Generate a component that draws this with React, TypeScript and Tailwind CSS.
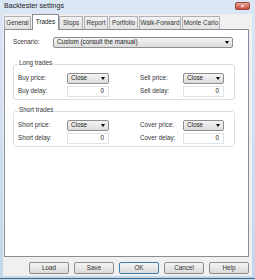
import React from 'react';

const tabs = [
  { name: 'General', w: 'w-[27px]' },
  { name: 'Trades', w: 'w-[27px]', active: true },
  { name: 'Stops', w: 'w-[24px]' },
  { name: 'Report', w: 'w-[24px]' },
  { name: 'Portfolio', w: 'w-[29px]' },
  { name: 'Walk-Forward', w: 'w-[42px]' },
  { name: 'Monte Carlo', w: 'w-[38px]' },
];

const Arrow = () => (
  <span className="w-0 h-0 border-l-[2.5px] border-r-[2.5px] border-t-[3px] border-l-transparent border-r-transparent border-t-black" />
);

const Select = ({ value, w }: { value: string; w: string }) => (
  <div className={`${w} h-[11px] flex items-center justify-between pl-[3px] pr-[3px] rounded-[2px] border border-[#8e8e8e] bg-gradient-to-b from-[#f4f4f4] to-[#dcdcdc] text-[#222]`}>
    <span className="leading-none">{value}</span>
    <Arrow />
  </div>
);

const NumInput = ({ w }: { w: string }) => (
  <div className={`${w} h-[11px] flex items-center justify-end pr-[4px] border border-[#e2e3ea] bg-white text-[#222] leading-none`}>0</div>
);

const Row = ({ label, control, w }: { label: string; control: React.ReactNode; w: string }) => (
  <div className="flex items-center">
    <span className={`${w} text-[#333] leading-none`}>{label}</span>
    {control}
  </div>
);

const Group = ({
  title,
  left,
  right,
}: {
  title: string;
  left: [string, string];
  right: [string, string];
}) => (
  <div className="relative w-[222px] h-[36px] border border-[#d5dfe5] rounded-[3px] pt-[8px] pl-[4px] flex">
    <span className="absolute -top-[5px] left-[4px] bg-white px-[1px] leading-none text-[#333]">{title}</span>
    <div className="flex flex-col gap-[2px] w-[122px]">
      <Row label={left[0]} w="w-[49px]" control={<Select value="Close" w="w-[42px]" />} />
      <Row label={left[1]} w="w-[49px]" control={<NumInput w="w-[42px]" />} />
    </div>
    <div className="flex flex-col gap-[2px]">
      <Row label={right[0]} w="w-[43px]" control={<Select value="Close" w="w-[41px]" />} />
      <Row label={right[1]} w="w-[43px]" control={<NumInput w="w-[41px]" />} />
    </div>
  </div>
);

const Button = ({ label, def }: { label: string; def?: boolean }) => (
  <div
    className={`w-[40px] h-[12px] flex items-center justify-center rounded-[2px] border ${
      def ? 'border-[#3c7fb1]' : 'border-[#8e8e8e]'
    } bg-gradient-to-b from-[#f4f4f4] to-[#dadada] text-[#333] leading-none`}
  >
    {label}
  </div>
);

export default function App() {
  return (
    <div className="w-[255px] h-[280px] flex flex-col bg-gradient-to-b from-[#dbe7f5] to-[#c3d6ec] font-['Liberation_Sans',Arial,sans-serif] text-[6.3px] overflow-hidden">
      <div className="h-[14px] flex items-center justify-between pl-[4px] pr-[5px] shrink-0">
        <span className="text-[7.1px] text-[#222] leading-none">Backtester settings</span>
        <div className="w-[15px] h-[8px] mt-[-2px] rounded-[2px] border border-[#9b4a40] bg-gradient-to-b from-[#e7a79d] to-[#c8483b] flex items-center justify-center text-white text-[6px] font-bold leading-none">
          ×
        </div>
      </div>
      <div className="flex-1 ml-[3px] mr-[3px] bg-[#f0f0f0] flex flex-col">
        <div className="h-[15px] flex items-end pl-[1px] shrink-0">
          {tabs.map((t) =>
            t.active ? (
              <div
                key={t.name}
                className={`${t.w} h-[16px] -mb-[1px] relative z-10 bg-white border border-b-0 border-[#898c95] flex items-center justify-center text-[#222] leading-none`}
              >
                {t.name}
              </div>
            ) : (
              <div
                key={t.name}
                className={`${t.w} h-[13px] mr-[1px] bg-gradient-to-b from-[#f2f2f2] to-[#e3e3e3] border border-b-0 border-[#aeb0b5] flex items-center justify-center text-[#333] leading-none`}
              >
                {t.name}
              </div>
            )
          )}
        </div>
        <div className="ml-[1px] w-[245px] h-[228px] bg-white border border-[#898c95] pt-[7px] pl-[8px] flex flex-col shrink-0">
          <div className="flex items-center">
            <span className="w-[40px] text-[#333] leading-none">Scenario:</span>
            <Select value="Custom (consult the manual)" w="w-[180px]" />
          </div>
          <div className="mt-[16px]">
            <Group title="Long trades" left={['Buy price:', 'Buy delay:']} right={['Sell price:', 'Sell delay:']} />
          </div>
          <div className="mt-[11px]">
            <Group title="Short trades" left={['Short price:', 'Short delay:']} right={['Cover price:', 'Cover delay:']} />
          </div>
        </div>
        <div className="flex justify-end gap-[5px] pt-[5px] w-[246px]">
          <Button label="Load" />
          <Button label="Save" />
          <Button label="OK" def />
          <Button label="Cancel" />
          <Button label="Help" />
        </div>
      </div>
      <div className="h-[2px] shrink-0" />
      <div className="h-[1px] bg-[#3d6b86] shrink-0" />
      <div className="h-[1px] shrink-0" />
    </div>
  );
}
